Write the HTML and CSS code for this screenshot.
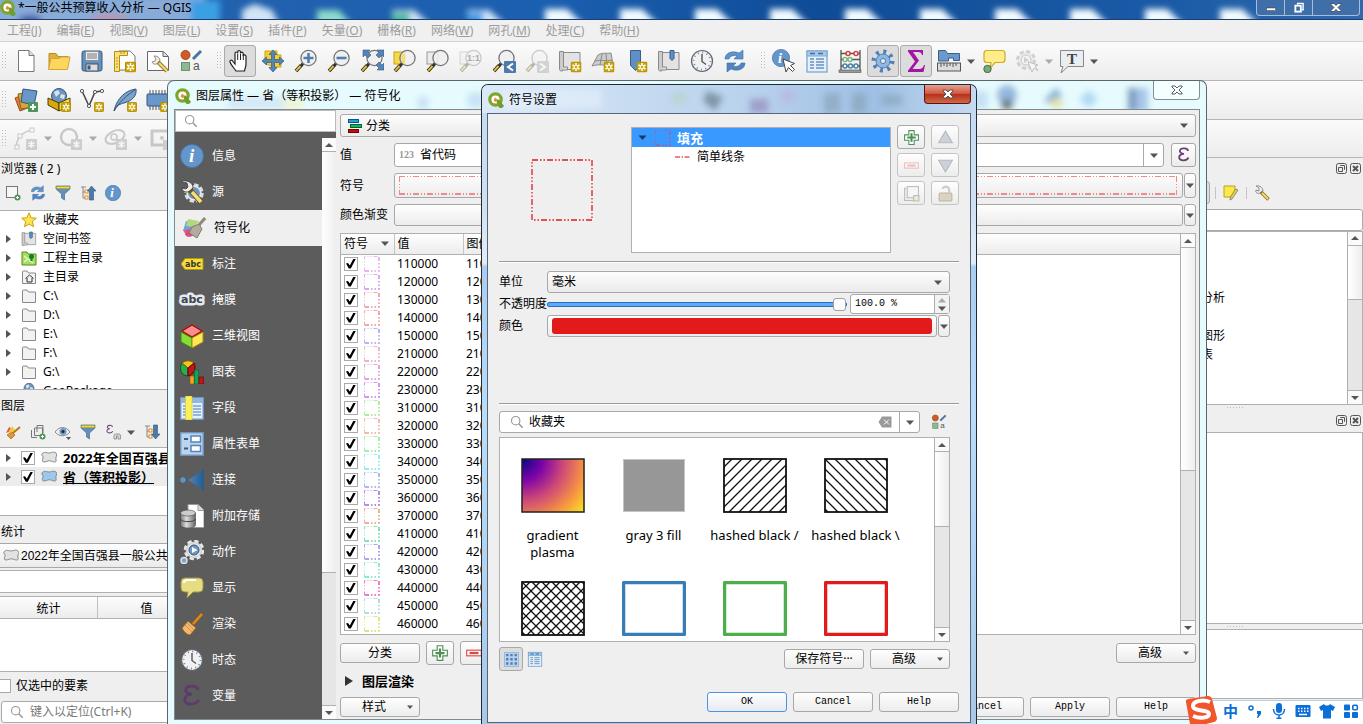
FILE: index.html
```html
<!DOCTYPE html>
<html lang="zh-CN">
<head>
<meta charset="utf-8">
<title>*一般公共预算收入分析 — QGIS</title>
<link rel="stylesheet" href="styles.css">
</head>
<body>
<svg class="defs" width="0" height="0" aria-hidden="true">
<defs>
<filter id="soft" x="-50%" y="-50%" width="200%" height="200%"><feGaussianBlur stdDeviation="3"/></filter>
<radialGradient id="plasma" gradientUnits="userSpaceOnUse" cx="2" cy="2" r="80"><stop offset="0" stop-color="#0d0887"/><stop offset=".25" stop-color="#7e03a8"/><stop offset=".5" stop-color="#cc4778"/><stop offset=".77" stop-color="#f89540"/><stop offset="1" stop-color="#f8e621"/></radialGradient>
<linearGradient id="cone"><stop offset="0" stop-color="#4e86bb"/><stop offset="1" stop-color="#245a90"/></linearGradient>
<linearGradient id="cyl"><stop offset="0" stop-color="#777"/><stop offset=".4" stop-color="#ddd"/><stop offset="1" stop-color="#666"/></linearGradient>
<pattern id="h1" width="10" height="10" patternUnits="userSpaceOnUse"><path d="M-1 11L11-1M-1 1L1-1M9 11L11 9" stroke="#111" stroke-width="1.3"/></pattern>
<pattern id="h2" width="10" height="10" patternUnits="userSpaceOnUse"><path d="M-1-1L11 11M9-1L11 1M-1 9L1 11" stroke="#111" stroke-width="1.3"/></pattern>
</defs>
<symbol id="nb" viewBox="0 0 11 11"><rect x=".5" y=".5" width="10" height="10" rx="1" fill="#c9a40c" stroke="#b28f00"/><path d="M5.500 1.500v8M2 3.500l7 4M9 3.500l-7 4" stroke="#fff" stroke-width="1.500"/><circle cx="5.500" cy="5.500" r="1.200" fill="#c9a40c"/></symbol>
<symbol id="logo" viewBox="0 0 16 16"><circle cx="7.500" cy="7.500" r="5.700" fill="#fff" stroke="#7da62b" stroke-width="3.200"/><path d="M8 8l3-.5 5 6.500-2 2-3-.3z" fill="#6f9d28"/><path d="M7 5.500l3 2.500-2.500 2-2-1.500z" fill="#ee8b3a"/></symbol>
<symbol id="mag" viewBox="0 0 24 24"><path d="M9 14.500l-2 2.500" stroke="#333" stroke-width="3"/><path d="M7 16.500L2 22" stroke="#222" stroke-width="3.500"/><path d="M6.500 17L2.300 21.700" stroke="#ecc12c" stroke-width="2"/><circle cx="14.500" cy="9" r="7.600" fill="#efefef" fill-opacity=".85" stroke="#777" stroke-width="1.300"/></symbol>
<symbol id="i-new" viewBox="0 0 24 24"><path d="M4.500 1.500h10.500l5 5v16H4.500z" fill="#fff" stroke="#777"/><path d="M15 1.500v5h5" fill="#ddd" stroke="#777"/></symbol>
<symbol id="i-open" viewBox="0 0 24 24"><path d="M2 20V4.500h7l2 3h10v4" fill="#e0b13a" stroke="#b78d27"/><path d="M1.500 20.500L4 9.500h8l2-1.500h9l-2.500 12.500z" fill="#ffd75e" stroke="#d3a63a"/></symbol>
<symbol id="i-save" viewBox="0 0 24 24"><rect x="2" y="2" width="20" height="20" rx="2" fill="#6391c1" stroke="#365b86"/><rect x="5.500" y="2.500" width="13" height="9" fill="#eee" stroke="#777" stroke-width=".6"/><path d="M7 5h10M7 7h10M7 9h10" stroke="#777"/><rect x="6" y="15" width="12" height="7" fill="#ddd" stroke="#456"/><rect x="7.500" y="16.500" width="3" height="4" fill="#365b86"/></symbol>
<symbol id="i-layout" viewBox="0 0 24 24"><path d="M6 2h11l5 5v14H6z" fill="#fff" stroke="#777"/><path d="M1.500 2.500h13v4h-8v16h-5z" fill="#fbe27a" stroke="#b48f10"/><path d="M3 9h2M3 12h2M3 15h2M3 18h2M8 3v2M11 3v2" stroke="#b48f10"/><use href="#nb" x="12" y="12.500" width="11" height="11"/></symbol>
<symbol id="i-mgr" viewBox="0 0 24 24"><path d="M1.500 2.500h16l5 5v14h-21z" fill="#fff" stroke="#666"/><path d="M17 2.500v5h5" fill="#ddd" stroke="#666"/><path d="M8 7l2 3-1 2-3 1c1 3 4 2 5 2l3-3c0-3-2-5-5-5z" fill="#eee" stroke="#777" stroke-width=".8"/><path d="M12 13l9 9" stroke="#9a7b20" stroke-width="4"/><path d="M13 14l8 8" stroke="#f4dc7c" stroke-width="2"/></symbol>
<symbol id="i-style" viewBox="0 0 24 24"><circle cx="6.500" cy="6" r="4.500" fill="#cf5a2a" stroke="#a34a22"/><rect x="2.500" y="13.500" width="8" height="8" fill="#8cb98f" stroke="#6a946d"/><path d="M22 2l-8 8" stroke="#4a74a3" stroke-width="3"/></symbol>
<symbol id="i-pan" viewBox="0 0 24 24"><path d="M8 22c-2-3-5-6-6-9-.5-2 2-2.500 3-.5l2 2.500V4.500c0-2 2.500-2 2.700 0V3c0-2 2.600-2 2.800 0v1.500c.3-2 2.700-1.600 2.700.2V7c.3-1.700 2.800-1.600 2.800.4V15c0 3-1 4-1.500 7z" fill="#fff" stroke="#222" stroke-width="1.200"/><path d="M9.700 5v6M12.500 5v6M15.300 6v5" stroke="#222"/></symbol>
<symbol id="i-pansel" viewBox="0 0 24 24"><path d="M4 2h12v4h4v12h-8l-8-4z" fill="#f5d02f" stroke="#caa50c"/><path d="M12 1l4 4.500h-2.500V10.500H18.500V8l4.500 4-4.500 4v-2.500H13.500V18.500H16L12 23l-4-4.500h2.500V13.500H5.500V16L1 12l4.500-4v2.500h5V5.500H8z" fill="#5485b8" stroke="#355a80" stroke-width=".7"/></symbol>
<symbol id="i-zin" viewBox="0 0 24 24"><use href="#mag"/><path d="M14.500 4v10M9.500 9h10" stroke="#4e7fb2" stroke-width="2.600"/></symbol>
<symbol id="i-zout" viewBox="0 0 24 24"><use href="#mag"/><path d="M9.500 9h10" stroke="#4e7fb2" stroke-width="2.600"/></symbol>
<symbol id="i-zfull" viewBox="0 0 24 24"><use href="#mag"/><path d="M3 1h7L8 3l3 3-3 3-3-3-2 2zM24 1v7l-2-2-3 3-3-3 3-3-2-2zM24 21h-7l2-2-3-3 3-3 3 3 2-2z" fill="#5485b8" stroke="#355a80" stroke-width=".6"/></symbol>
<symbol id="i-zsel" viewBox="0 0 24 24"><rect x="1" y="3" width="11" height="12" fill="#f5d94a" stroke="#c4a20e"/><use href="#mag"/><path d="M8 5h4v9H9z" fill="#f5d94a" fill-opacity=".7"/></symbol>
<symbol id="i-zlay" viewBox="0 0 24 24"><rect x="1" y="3" width="11" height="12" fill="#ececec" stroke="#999"/><use href="#mag"/></symbol>
<symbol id="i-znat" viewBox="0 0 24 24"><g opacity=".35"><rect x="1" y="3" width="11" height="12" fill="#eee" stroke="#999"/><use href="#mag"/></g></symbol>
<symbol id="i-zlast" viewBox="0 0 24 24"><use href="#mag"/><rect x="12" y="12" width="12" height="12" rx="1" fill="#4c7bab"/><path d="M21 14.500l-5 3.500 5 3.500" fill="none" stroke="#fff" stroke-width="2"/></symbol>
<symbol id="i-znext" viewBox="0 0 24 24"><g opacity=".35"><use href="#mag"/><rect x="12" y="12" width="12" height="12" rx="1" fill="#999"/><path d="M15 14.500l5 3.500-5 3.500" fill="none" stroke="#fff" stroke-width="2"/></g></symbol>
<symbol id="map" viewBox="0 0 24 24"><path d="M4 3.500h18v17H5" fill="#e3e3e3" stroke="#8a8a8a"/><path d="M1.500 2.500h4v18c0 2-4 2-4 0z" fill="#ccc" stroke="#8a8a8a"/><path d="M5.500 18h4v3h-6" fill="#ddd" stroke="#8a8a8a"/></symbol>
<symbol id="i-mapn" viewBox="0 0 24 24"><use href="#map"/><use href="#nb" x="12.500" y="12.500" width="11" height="11"/></symbol>
<symbol id="i-map3" viewBox="0 0 24 24"><path d="M1 17L7 6c5-3 8-1 13-2l2 12c-6 2-12-2-21 1z" fill="#ccc" stroke="#8a8a8a"/><path d="M4 12c6-2 10 1 17-1M11 5l-2 11M15 5l1 11" stroke="#8a8a8a" fill="none"/><use href="#nb" x="12.500" y="12.500" width="11" height="11"/></symbol>
<symbol id="i-bmn" viewBox="0 0 24 24"><path d="M6.500 1.500h10v15l-5 5-5-5z" fill="#5f8fc4" stroke="#3b5f88"/><use href="#nb" x="12.500" y="12.500" width="11" height="11"/></symbol>
<symbol id="i-bm" viewBox="0 0 24 24"><use href="#map"/><path d="M13 1.500h4v8l-2 2-2-2z" fill="#5f8fc4" stroke="#3b5f88"/></symbol>
<symbol id="i-clock" viewBox="0 0 24 24"><circle cx="12" cy="12" r="10.500" fill="#f1f1f1" stroke="#666" stroke-width="1.200"/><circle cx="12" cy="12" r="8.500" fill="none" stroke="#5f8fc4" stroke-width="2" stroke-dasharray="1 3.450"/><path d="M12 5v7.500l4 3" fill="none" stroke="#555" stroke-width="1.400"/></symbol>
<symbol id="i-ref" viewBox="0 0 24 24"><path d="M2 10C2 4 9 1 16 4l4-3v9h-9l3-3c-4-1-7 0-8 3z" fill="#5f93cc" stroke="#3c6ea5" stroke-width=".6"/><path d="M22 14c0 6-7 9-14 6l-4 3v-9h9l-3 3c4 1 7 0 8-3z" fill="#4f84bf" stroke="#3c6ea5" stroke-width=".6"/></symbol>
<symbol id="info" viewBox="0 0 24 24"><circle cx="12" cy="12" r="11.500" fill="#6496cc" stroke="#4676a9"/></symbol>
<symbol id="i-cur" viewBox="0 0 24 24"><path d="M11 10l3 13 2.500-4.500 4 4 2-2-4-4 4-2z" fill="#fff" stroke="#444"/></symbol>
<symbol id="i-tab" viewBox="0 0 24 24"><rect x="2" y="2" width="20" height="21" fill="#e6f0fa" stroke="#7aa6d4" stroke-width="1.300"/><rect x="2" y="2" width="20" height="5" fill="#a8cbe9" stroke="#7aa6d4"/><path d="M5 4.500h5M13 4.500h5" stroke="#3f6d9d" stroke-width="1.500"/><path d="M5 10h4M11 10h8M5 13h4M11 13h8M5 16h4M11 16h8M5 19h4M11 19h8" stroke="#6792bf" stroke-width="1.400"/></symbol>
<symbol id="i-abac" viewBox="0 0 24 24"><path d="M3 1v21M22 1v21M3 4.500h19M3 10.500h19M3 17h19" stroke="#555" stroke-width="1.300"/><rect x="1" y="21" width="22" height="2.500" fill="#999" stroke="#555" stroke-width=".6"/><g fill="#fff" stroke-width="1.600"><g stroke="#d04545"><circle cx="10" cy="4.500" r="2"/><circle cx="18" cy="4.500" r="2"/></g><g stroke="#7cb97c"><circle cx="7" cy="10.500" r="2"/><circle cx="12" cy="10.500" r="2"/></g><g stroke="#4b84a8"><circle cx="7" cy="17" r="2"/><circle cx="12.500" cy="17" r="2"/><circle cx="18" cy="17" r="2"/></g></g></symbol>
<symbol id="i-gear" viewBox="0 0 24 24"><circle cx="12" cy="12" r="9" fill="none" stroke="#4e80b8" stroke-width="5" stroke-dasharray="2.800 4.270"/><circle cx="12" cy="12" r="7" fill="#8fb7e2" stroke="#4e80b8"/><circle cx="12" cy="12" r="2.600" fill="#e6e6e6" stroke="#4e80b8"/></symbol>
<symbol id="i-sum" viewBox="0 0 24 24"><path d="M4 1h15v5h-1c-.5-2-1.500-3-4-3H9l6 8.500L8.500 20H15c3 0 4-1.500 5-4h1l-1.500 7H4v-1.500L11 12.500 4 2.500z" fill="#a414a4"/></symbol>
<symbol id="i-meas" viewBox="0 0 24 24"><path d="M1.500 1.500h7l2 3h12v7h-6V9h-5v3h-10z" fill="#6a99cc" stroke="#3b5f88"/><rect x=".5" y="14" width="23" height="8" fill="#ddd" stroke="#555"/><path d="M4 14v4M7 14v3M10 14v4M13 14v3M16 14v4M19 14v3" stroke="#555"/></symbol>
<symbol id="i-tip" viewBox="0 0 24 24"><path d="M5 1.500h15q3 0 3 3v6q0 3-3 3h-7l-5 6 1-6H5q-3 0-3-3v-6q0-3 3-3z" fill="#ffed8a" stroke="#cdab20" stroke-width="1.200"/><circle cx="5.500" cy="20" r="3.700" fill="#79a97c" stroke="#3f6f43"/></symbol>
<symbol id="i-act" viewBox="0 0 24 24"><g opacity=".4"><circle cx="11" cy="11" r="8.500" fill="#ddd" stroke="#999" stroke-width="3" stroke-dasharray="4 2.680"/><circle cx="11" cy="11" r="5" fill="#eee" stroke="#888"/><path d="M9 8l5 3-5 3z" fill="#999"/><path d="M13 13l4 10 2-4 4 3-3-5 3-1z" fill="#fff" stroke="#777"/></g></symbol>
<symbol id="i-text" viewBox="0 0 24 24"><path d="M.5 1.500h23v16H8L1 24l2-6.500H.5z" fill="#e8eef2" stroke="#888"/></symbol>
<symbol id="i-dsm" viewBox="0 0 24 24"><path d="M1 10l10-4 5 13-10 4z" fill="#e8793a" stroke="#a44a16"/><path d="M4 6l11-2 3 15-11 2z" fill="#d9a72c" stroke="#7a6a2a"/><path d="M9 1l14 2-3 14-13-3z" fill="#6a97c9" stroke="#33557e"/><rect x="14" y="14" width="10" height="10" rx="1" fill="#4e9657"/><path d="M19 16v6M16 19h6" stroke="#fff" stroke-width="2"/></symbol>
<symbol id="i-gpkg" viewBox="0 0 24 24"><circle cx="12" cy="8" r="7.500" fill="#6d94bd" stroke="#33557e"/><path d="M7 4l4-2 2 3-4 4zM14 6l4 1-1 4-4-1z" fill="#d7e4f0"/><path d="M1 10l11 5v8L1 17z" fill="#d8a90f" stroke="#4a3c00"/><path d="M23 10l-11 5v8l11-6z" fill="#f7d94e" stroke="#4a3c00"/></symbol>
<symbol id="i-gpkgn" viewBox="0 0 24 24"><use href="#i-gpkg"/><use href="#nb" x="14" y="14" width="10" height="10"/></symbol>
<symbol id="i-vec" viewBox="0 0 24 24"><path d="M2 3l7 15 6-14 7-1" fill="none" stroke="#444" stroke-width="1.500"/><g fill="#fff" stroke="#555"><circle cx="2" cy="3" r="1.600"/><circle cx="9" cy="18" r="1.600"/><circle cx="15" cy="4" r="1.600"/><circle cx="22" cy="3" r="1.600"/></g><use href="#nb" x="14" y="14" width="10" height="10"/></symbol>
<symbol id="i-fea" viewBox="0 0 24 24"><path d="M1 23C4 9 14 2 23 1c1 7-4 12-12 14-4 1-7 2-10 8z" fill="#7ba3cc" stroke="#33557e"/><path d="M1 23C7 13 14 7 22 2" stroke="#33557e" fill="none"/><use href="#nb" x="14" y="14" width="10" height="10"/></symbol>
<symbol id="i-chip" viewBox="0 0 24 24"><path d="M4 2v20M7 2v20M10 2v20M13 2v20M16 2v20M19 2v20" stroke="#555"/><rect x="1" y="6" width="22" height="12" rx="1" fill="#6a97c9" stroke="#33557e"/><use href="#nb" x="14" y="14" width="10" height="10"/></symbol>
<symbol id="i-d1" viewBox="0 0 24 24"><g opacity=".4"><path d="M2 20C3 10 8 5 18 3" fill="none" stroke="#888" stroke-width="1.500"/><g fill="#fff" stroke="#888"><rect x="1" y="18" width="4" height="4"/><rect x="4" y="7" width="4" height="4"/><rect x="16" y="1" width="4" height="4"/></g><rect x="12" y="12" width="11" height="11" fill="#999"/><path d="M17.500 14v7M14.500 15.500l6 4M20.500 15.500l-6 4" stroke="#fff" stroke-width="1.500"/></g></symbol>
<symbol id="i-d2" viewBox="0 0 24 24"><g opacity=".4"><circle cx="10" cy="10" r="8" fill="none" stroke="#888" stroke-width="2.500"/><rect x="12" y="12" width="11" height="11" fill="#999"/><path d="M17.500 14v7M14.500 15.500l6 4M20.500 15.500l-6 4" stroke="#fff" stroke-width="1.500"/></g></symbol>
<symbol id="i-d3" viewBox="0 0 24 24"><g opacity=".4"><ellipse cx="11" cy="10" rx="10" ry="6" transform="rotate(-25 11 10)" fill="none" stroke="#888" stroke-width="2"/><circle cx="10" cy="10" r="3" fill="none" stroke="#888" stroke-width="1.500"/><rect x="12" y="12" width="11" height="11" fill="#999"/><path d="M17.500 14v7M14.500 15.500l6 4M20.500 15.500l-6 4" stroke="#fff" stroke-width="1.500"/></g></symbol>
<symbol id="i-d4" viewBox="0 0 24 24"><g opacity=".4"><rect x="3" y="4" width="20" height="14" fill="none" stroke="#888" stroke-width="3"/><circle cx="13" cy="11" r="2" fill="#888"/><rect x="14" y="13" width="10" height="10" fill="#999"/></g></symbol>
<symbol id="s-add" viewBox="0 0 16 16"><rect x="1.500" y="1.500" width="11" height="11" fill="#f6f6f6" stroke="#777"/><circle cx="12.500" cy="12.500" r="3" fill="#4e9657"/><path d="M12.500 11v3M11 12.500h3" stroke="#fff"/></symbol>
<symbol id="s-fun" viewBox="0 0 16 16"><path d="M1 1h14v3L9.500 9v6l-3-2V9L1 4z" fill="#6390b8" stroke="#44709a" stroke-width=".7"/><path d="M1.500 1.500h13v2h-13z" fill="#f4dc4a" stroke="#b99c14" stroke-width=".6"/></symbol>
<symbol id="s-up" viewBox="0 0 16 16"><path d="M1 2h5M3 2v11h4M3 7h4" stroke="#888" fill="none"/><rect x="5" y="5" width="3" height="3" fill="#fff" stroke="#e58a1e"/><rect x="5" y="11" width="3" height="3" fill="#fff" stroke="#e58a1e"/><path d="M11.500 1L16 6h-2.500v9h-4V6H7.500z" fill="#4c7bab" stroke="#2f557d" stroke-width=".6"/></symbol>
<symbol id="s-down" viewBox="0 0 16 16"><path d="M1 2h5M3 2v11h4M3 7h4" stroke="#888" fill="none"/><rect x="5" y="5" width="3" height="3" fill="#fff" stroke="#e58a1e"/><rect x="5" y="11" width="3" height="3" fill="#fff" stroke="#e58a1e"/><path d="M11.500 15L16 10h-2.500V1h-4v9H7.500z" fill="#4c7bab" stroke="#2f557d" stroke-width=".6"/></symbol>
<symbol id="s-star" viewBox="0 0 16 16"><path d="M8 .8l2.100 5 5.200.4-4 3.400 1.300 5.200L8 12l-4.600 2.800 1.300-5.200-4-3.400 5.200-.4z" fill="#ffe44d" stroke="#c89f14"/></symbol>
<symbol id="s-prj" viewBox="0 0 16 16"><path d="M1 2h5l1 2h8v11H1z" fill="#a6df5c" stroke="#5a8a24"/><path d="M3 6l9 7M3 12l4-3" stroke="#e8f8c8" stroke-width="1.500"/><circle cx="10.500" cy="6.500" r="2.500" fill="#12802a"/><path d="M10.500 8v3" stroke="#12802a" stroke-width="2"/></symbol>
<symbol id="s-fold" viewBox="0 0 16 16"><path d="M1.500 3q0-1 1-1H6l1.500 2H14.500v10.500h-13z" fill="#f2f2f2" stroke="#888"/></symbol>
<symbol id="s-home" viewBox="0 0 16 16"><use href="#s-fold"/><path d="M4.500 9.500L8.500 6l4 3.500M6 9v4h5V9" fill="none" stroke="#333"/></symbol>
<symbol id="s-brush" viewBox="0 0 16 16"><path d="M1 9l3-6 5 3z" fill="#e65a4a"/><path d="M3 9l4-7 4 5z" fill="#f0cf3c"/><path d="M2 11l5-3 3 3-4 4z" fill="#e2962f" stroke="#9a5d12" stroke-width=".6"/><path d="M8 9l7-6" stroke="#b97524" stroke-width="2"/></symbol>
<symbol id="s-grp" viewBox="0 0 16 16"><path d="M1.500 6v7.500H7M4.500 4v7.500h8V4zM7 8V1.500h6V9" fill="#eee" stroke="#777"/><circle cx="12.500" cy="12.500" r="3" fill="#4e9657"/><path d="M12.500 11v3M11 12.500h3" stroke="#fff"/></symbol>
<symbol id="s-eye" viewBox="0 0 16 16"><path d="M0 8c4-6 11-6 15 0-4 5-11 5-15 0z" fill="#eee" stroke="#888"/><circle cx="8" cy="7.500" r="3.500" fill="#6d9ac8"/><circle cx="8" cy="7.500" r="1.500" fill="#222"/><path d="M11 13h5l-2.500 3z" fill="#555"/></symbol>
<symbol id="s-eps" viewBox="0 0 16 16"><path d="M12 4c0-3-7-3.500-8-.8C3.300 5 5 6.800 8 6.800 4.500 7 2.500 9 3.300 11.300c1 3 8 2.800 9-.8" fill="none" stroke="currentColor" stroke-width="1.800"/></symbol>
<symbol id="s-epsf" viewBox="0 0 16 16"><use href="#s-eps" x="0" y="0" width="10" height="11"/><path d="M9 15v-3q0-2 1.500-2H14q1.500 0 1.500 2v3h-2.500v-3h-1.500v3z" fill="#ddd" stroke="#777" stroke-width=".7"/></symbol>
<symbol id="s-poly" viewBox="0 0 16 16"><path d="M1 4c2-3 5-1 7-1s5-2 7 0-1 4 0 7-3 2-5 1-5 1-7 1-2-2-1-4-2-2-1-4z" fill="currentColor" stroke="#888"/></symbol>
<symbol id="s-glass" viewBox="0 0 16 16"><circle cx="6.500" cy="6.500" r="4.800" fill="none" stroke="#999" stroke-width="1.300"/><path d="M10 10l4.500 4.500" stroke="#999" stroke-width="1.800"/></symbol>
<symbol id="s-wrench" viewBox="0 0 16 16"><path d="M2 1l3 2v3L2 5C1 8 4 9 6 8l3-2C9 3 6 0 2 1z" fill="#eee" stroke="#777" stroke-width=".8"/><path d="M7 7l7.500 7.500" stroke="#8b7420" stroke-width="3.500"/><path d="M8 8l6 6" stroke="#f4dc7c" stroke-width="1.800"/></symbol>
<symbol id="s-note" viewBox="0 0 16 16"><path d="M1 1h11v8l-3 3H1z" fill="#fbe74e" stroke="#c0a00f"/><path d="M15 5L9 14l-2 1 .5-3 5-8z" fill="#e6d34a" stroke="#777" stroke-width=".8"/></symbol>
<symbol id="s-class" viewBox="0 0 16 16"><rect x="1.500" y="1.500" width="10" height="3" fill="#1fa6c4" stroke="#0f4fa0"/><rect x="3.500" y="6.500" width="11" height="3" fill="#0db867" stroke="#076030"/><rect x="1.500" y="11.500" width="10" height="3" fill="#c40f0f" stroke="#700"/></symbol>
<symbol id="s-plus" viewBox="0 0 16 16"><path d="M5.500 1.500h5v4h4v5h-4v4h-5v-4h-4v-5h4z" fill="#fff" stroke="#4e8f57"/><path d="M8 4v8M4 8h8" stroke="#4e8f57" stroke-width="2"/></symbol>
<symbol id="s-minus" viewBox="0 0 16 16"><rect x="1.500" y="5.500" width="13" height="5" fill="#fff" stroke="#e04545"/><path d="M4 8h8" stroke="#e04545" stroke-width="2"/></symbol>
<symbol id="s-tu" viewBox="0 0 16 16"><path d="M8 2l6.500 11h-13z" fill="#ccd2d8" stroke="#b4bac0"/></symbol>
<symbol id="s-td" viewBox="0 0 16 16"><path d="M8 14L1.500 3h13z" fill="#ccd2d8" stroke="#b4bac0"/></symbol>
<symbol id="s-dup" viewBox="0 0 16 16"><path d="M3 3H1.500v11.500H12V13" fill="#eee" stroke="#bbb"/><rect x="4" y="1.500" width="10.500" height="10.500" fill="#f6f6f6" stroke="#bbb"/><rect x="10" y="10" width="5" height="5" fill="#eee9d0" stroke="#bbb"/></symbol>
<symbol id="s-lock" viewBox="0 0 16 16"><path d="M5 3.500C7 .5 11.500 1 11.500 5v2" fill="none" stroke="#ccc" stroke-width="2"/><rect x="2" y="7.500" width="12" height="7.500" rx="1" fill="#d9d3c0" stroke="#bbb5a5"/></symbol>
<symbol id="s-grid" viewBox="0 0 16 16"><rect x=".5" y=".5" width="15" height="15" fill="#b9d3ee" stroke="#9bb9d8"/><path d="M3.500 2v12M8 2v12M12.500 2v12" stroke="#4d7db4" stroke-width="2.500" stroke-dasharray="2.500 2"/></symbol>
<symbol id="s-sw" viewBox="0 0 16 16"><g fill="none" stroke="currentColor"><path d="M.5 15.500V.5h15" stroke-dasharray="4 2 1 2 1 2"/><path d="M15 1v14.500M1 15h14.500" stroke-width="2" stroke-dasharray="4 2 1.500 2 1.500 2"/></g></symbol>
<symbol id="p-src" viewBox="0 0 24 24"><circle cx="14" cy="13" r="8" fill="#7ea4cf" stroke="#ddd" stroke-width="3.500" stroke-dasharray="4.200 2.080"/><circle cx="14" cy="13" r="6.700" fill="#6f97c5" stroke="#e8e8e8" stroke-width="1.500"/><path d="M2 2l5 1 1 4-2 2-4-1c0 4 5 5 8 3l3-3c0-5-5-8-11-7z" fill="#eee" stroke="#333" stroke-width=".8"/><path d="M10 10l11 12" stroke="#6a5416" stroke-width="5.500"/><path d="M12 12l9 10" stroke="#f5dd80" stroke-width="3.500"/></symbol>
<symbol id="p-sym" viewBox="0 0 24 24"><path d="M4 5l10 2-5 9-8-1z" fill="#6aa6d8"/><path d="M6 3l11 2-4 6-9-1z" fill="#b5d77c"/><path d="M1 14l8-1-1 7-3 1z" fill="#e35e8f"/><path d="M5 13l7 6-4 2-5-2z" fill="#d94f7c"/><path d="M10 11l7-3 3 5-5 9-8-5z" fill="#b2ab9f" stroke="#716a5e" stroke-width=".8"/><path d="M17 9l6-7" stroke="#8f8779" stroke-width="3"/></symbol>
<symbol id="p-lab" viewBox="0 0 24 24"><path d="M1 12l4-5.500h18v11H5z" fill="#f6dd3b" stroke="#b5950a"/></symbol>
<symbol id="p-3d" viewBox="0 0 24 24"><path d="M12 1l10 6-10 6L2 7z" fill="#f88e8e" stroke="#b00808" stroke-width="1.300"/><path d="M1 8l11 6v10L1 18z" fill="#86dd38" stroke="#3c8a10"/><path d="M23 8l-11 6v10l11-6z" fill="#fce957" stroke="#a98b08"/></symbol>
<symbol id="p-dia" viewBox="0 0 24 24"><path d="M8 8V16A8 8 0 0 1 2 3z" fill="#2aab4e" stroke="#0c5222"/><path d="M8 8L2 3a9 9 0 0 1 12 0z" fill="#f6c51d" stroke="#7d6105"/><path d="M8 8l6-5a9 9 0 0 1-6 13z" fill="#c01818" stroke="#600"/><rect x="10" y="16" width="4" height="8" fill="#f4a51c" stroke="#7d5105" stroke-width=".6"/><rect x="14.500" y="10" width="4" height="14" fill="#12a552" stroke="#064" stroke-width=".6"/><rect x="19" y="17" width="4.500" height="7" fill="#c01818" stroke="#600" stroke-width=".6"/></symbol>
<symbol id="p-fld" viewBox="0 0 24 24"><rect x=".7" y="1.700" width="22.500" height="21.500" fill="#e6f0fa" stroke="#6b97c6" stroke-width="1.400"/><rect x="1" y="2" width="22" height="5" fill="#8fb7df"/><path d="M3 10h4M13 10h8M3 13h4M13 13h8M3 16h4M13 16h8M3 19h4M13 19h8" stroke="#7aa1cb" stroke-width="1.500"/><rect x="5.500" y="0" width="6.500" height="24" fill="#fcf05a" stroke="#d8c51c" stroke-width=".6"/></symbol>
<symbol id="p-frm" viewBox="0 0 24 24"><rect x=".7" y=".7" width="22.500" height="22.500" fill="#bdd4eb" stroke="#6b97c6" stroke-width="1.400"/><path d="M4 7h4M4 16.500h4" stroke="#335c88" stroke-width="2"/><rect x="11" y="4" width="9.500" height="6" fill="#fff" stroke="#5584b8" stroke-width="1.500"/><rect x="11" y="13.500" width="9.500" height="6" fill="#fff" stroke="#5584b8" stroke-width="1.500"/></symbol>
<symbol id="p-join" viewBox="0 0 24 24"><circle cx="3" cy="12" r="2.700" fill="#5f93c9"/><path d="M8 12L24 1.500v21z" fill="url(#cone)"/></symbol>
<symbol id="p-sto" viewBox="0 0 24 24"><path d="M8 .5h10l6 6v17H8z" fill="#fff" stroke="#999"/><path d="M18 .5v6h6" fill="#ddd" stroke="#999"/><path d="M.5 9v12c0 4 15 4 15 0V9z" fill="url(#cyl)" stroke="#444" stroke-width=".6"/><path d="M.5 15c0 3.500 15 3.500 15 0" fill="none" stroke="#444"/><ellipse cx="8" cy="9" rx="7.500" ry="3" fill="#ccc" stroke="#444" stroke-width=".6"/></symbol>
<symbol id="p-act" viewBox="0 0 24 24"><circle cx="14" cy="10" r="8.300" fill="#ddd" stroke="#e8e8e8" stroke-width="4" stroke-dasharray="4 2.520"/><circle cx="14" cy="10" r="7.300" fill="#e8e8e8" stroke="#ccc"/><circle cx="14" cy="10" r="5" fill="#6f97c5" stroke="#33557e"/><path d="M12 7l5.500 3-5.500 3z" fill="#fff"/><circle cx="4" cy="20.500" r="3" fill="#7ea4cf" stroke="#e0e0e0" stroke-width="1.500"/></symbol>
<symbol id="p-dis" viewBox="0 0 24 24"><path d="M5 2h14q4 0 4 4v6q0 4-4 4h-6l-6 6 1-6H5q-4 0-4-4V6q0-4 4-4z" fill="#e6dc82" stroke="#a39843"/><path d="M4 7q0-3 3-3h9" stroke="#fff" stroke-width="2" fill="none"/></symbol>
<symbol id="p-ren" viewBox="0 0 24 24"><path d="M13 12l9-10" stroke="#8f5c14" stroke-width="4"/><path d="M13 12l9-10" stroke="#d58b2c" stroke-width="2.500"/><path d="M8 9l8 7-6 7c-3 0-6-3-8-7z" fill="#f0b870" stroke="#9a6420"/><path d="M5 13l7 7M7 11l7 7" stroke="#c98a40" stroke-width=".8"/></symbol>
<symbol id="ar" viewBox="0 0 8 5"><path d="M0 .5h8L4 5z" fill="currentColor"/></symbol>
<symbol id="x" viewBox="0 0 12 10"><path d="M1 1h3l2 2 2-2h3v1L8 5l3 3v1H8L6 7 4 9H1V8l3-3-3-3z" fill="currentColor" stroke="#444a55" stroke-width=".9"/></symbol>
<symbol id="dk" viewBox="0 0 25 11"><g fill="none" stroke="#555"><rect x=".5" y=".5" width="10" height="10" rx="2"/><path d="M4.500 3V2.500h4v4H8M2.500 4.500h4v4h-4z"/><rect x="14.500" y=".5" width="10" height="10" rx="2"/><path d="M17 3l5 5M22 3l-5 5" stroke-width="2"/></g></symbol>
</svg>

<main class="app">
<header class="titlebar">
<svg class="haze" viewBox="0 0 1363 20" preserveAspectRatio="none" aria-hidden="true"><g filter="url(#soft)"><rect x="-10" y="-5" width="215" height="32" fill="#a9c3e6" opacity=".75"/><ellipse cx="110" cy="20" rx="20" ry="5" fill="#c88f9c"/><ellipse cx="30" cy="20" rx="12" ry="5" fill="#3c4fa8"/><path d="M190 0h30v26h-30z" fill="#3b9fe4"/><path d="M242 26V10l12-6 18 6 8 16zM392 26V10h22l18 16zM467 26V10h22l18 16z" fill="#d3e4f5"/><path d="M317 26V10h22l14 16z" fill="#8edccb"/><path d="M392 26V12h18v14z" fill="#48bba0"/><path d="M467 26V12h16v14z" fill="#3a9be8"/><path d="M545 26V9h22l18 17zM620 26V9h22l18 17zM695 26V9h22l18 17zM770 26V9h22l18 17zM845 26V9h22l18 17zM920 26V9h22l18 17zM995 26V9h22l18 17zM1070 26V9h22l18 17zM1145 26V9h22l18 17zM1220 26V9h22l18 17z" fill="#f2fbff"/></g></svg>
<svg class="i16"><use href="#logo"/></svg><h1>*一般公共预算收入分析 — QGIS</h1>
<div class="winbtns"><button aria-label="最小化"><svg viewBox="0 0 12 12"><rect x="1" y="6.500" width="10" height="3" fill="#fff" stroke="#333" stroke-width=".6"/></svg></button><button aria-label="还原"><svg viewBox="0 0 12 12"><path d="M4.500 3V1.500h6v7H9" fill="none" stroke="#fff" stroke-width="1.500"/><rect x="2" y="4" width="6" height="6.500" fill="none" stroke="#fff" stroke-width="2"/></svg></button><button class="wide" aria-label="关闭"><svg viewBox="0 0 12 10" color="#fff"><use href="#x"/></svg></button></div>
</header>
<nav class="menubar"><button>工程(<u>J</u>)</button><button>编辑(<u>E</u>)</button><button>视图(<u>V</u>)</button><button>图层(<u>L</u>)</button><button>设置(<u>S</u>)</button><button>插件(<u>P</u>)</button><button>矢量(<u>O</u>)</button><button>栅格(<u>R</u>)</button><button>网络(<u>W</u>)</button><button>网孔(<u>M</u>)</button><button>处理(<u>C</u>)</button><button>帮助(<u>H</u>)</button></nav>
<div class="toolbar">
<i class="grip first"></i>
<button aria-label="新建"><svg><use href="#i-new"/></svg></button><button aria-label="打开"><svg><use href="#i-open"/></svg></button><button aria-label="保存"><svg><use href="#i-save"/></svg></button><button aria-label="新建布局"><svg><use href="#i-layout"/></svg></button><button aria-label="布局管理"><svg><use href="#i-mgr"/></svg></button><button aria-label="样式管理"><svg viewBox="0 0 24 24"><use href="#i-style"/><text class="ga" x="14" y="21">a</text></svg></button>
<i class="grip"></i>
<button class="on" aria-label="平移"><svg><use href="#i-pan"/></svg></button><button aria-label="平移到所选"><svg><use href="#i-pansel"/></svg></button><button aria-label="放大"><svg><use href="#i-zin"/></svg></button><button aria-label="缩小"><svg><use href="#i-zout"/></svg></button><button aria-label="全图"><svg><use href="#i-zfull"/></svg></button><button aria-label="缩放到所选"><svg><use href="#i-zsel"/></svg></button><button aria-label="缩放到图层"><svg><use href="#i-zlay"/></svg></button><button aria-label="原始分辨率"><svg viewBox="0 0 24 24"><use href="#i-znat"/><text class="g1" x="8" y="12">1:1</text></svg></button><button aria-label="上一视图"><svg><use href="#i-zlast"/></svg></button><button aria-label="下一视图"><svg><use href="#i-znext"/></svg></button><button aria-label="新建地图"><svg><use href="#i-mapn"/></svg></button><button aria-label="新建三维地图"><svg><use href="#i-map3"/></svg></button><button aria-label="新建书签"><svg><use href="#i-bmn"/></svg></button><button aria-label="书签"><svg><use href="#i-bm"/></svg></button><button aria-label="时态控制"><svg><use href="#i-clock"/></svg></button><button aria-label="刷新"><svg><use href="#i-ref"/></svg></button>
<i class="grip"></i>
<button aria-label="识别"><svg viewBox="0 0 24 24"><use href="#info" width="18" height="18"/><text class="gi small" x="6" y="14">i</text><use href="#i-cur"/></svg></button><button aria-label="属性表"><svg><use href="#i-tab"/></svg></button><button aria-label="字段计算器"><svg><use href="#i-abac"/></svg></button><button class="on" aria-label="工具箱"><svg><use href="#i-gear"/></svg></button><button class="on" aria-label="统计汇总"><svg><use href="#i-sum"/></svg></button><button class="dd" aria-label="测量"><svg><use href="#i-meas"/></svg><svg class="ar"><use href="#ar"/></svg></button><button aria-label="地图提示"><svg><use href="#i-tip"/></svg></button><button class="dd off" aria-label="运行动作"><svg><use href="#i-act"/></svg><svg class="ar"><use href="#ar"/></svg></button><button class="dd" aria-label="文字注记"><svg viewBox="0 0 24 24"><use href="#i-text"/><text class="gt" x="7" y="15">T</text></svg><svg class="ar"><use href="#ar"/></svg></button>
</div>
<div class="toolbar"><i class="grip first"></i><button aria-label="数据源管理"><svg><use href="#i-dsm"/></svg></button><button aria-label="新建数据包"><svg><use href="#i-gpkgn"/></svg></button><button aria-label="新建矢量"><svg><use href="#i-vec"/></svg></button><button aria-label="新建空间图层"><svg><use href="#i-fea"/></svg></button><button aria-label="新建临时图层"><svg><use href="#i-chip"/></svg></button></div>
<div class="toolbar last"><i class="grip first"></i><button class="dd off" aria-label="曲线"><svg><use href="#i-d1"/></svg><svg class="ar"><use href="#ar"/></svg></button><button class="dd off" aria-label="圆"><svg><use href="#i-d2"/></svg><svg class="ar"><use href="#ar"/></svg></button><button class="dd off" aria-label="椭圆"><svg><use href="#i-d3"/></svg><svg class="ar"><use href="#ar"/></svg></button><button class="off" aria-label="矩形"><svg><use href="#i-d4"/></svg></button></div>

<div class="workspace">
<aside class="dock left">
<h2>浏览器 ( 2 )</h2>
<div class="mini"><button aria-label="添加"><svg><use href="#s-add"/></svg></button><button aria-label="刷新"><svg><use href="#i-ref"/></svg></button><button aria-label="过滤"><svg><use href="#s-fun"/></svg></button><button aria-label="折叠"><svg><use href="#s-up"/></svg></button><button aria-label="属性"><svg viewBox="0 0 24 24"><use href="#info"/><text class="gi" x="8" y="18">i</text></svg></button></div>
<ul class="tree grow">
<li class="leaf"><svg><use href="#s-star"/></svg>收藏夹</li><li><svg><use href="#i-bm"/></svg>空间书签</li><li><svg><use href="#s-prj"/></svg>工程主目录</li><li><svg><use href="#s-home"/></svg>主目录</li><li><svg><use href="#s-fold"/></svg>C:\</li><li><svg><use href="#s-fold"/></svg>D:\</li><li><svg><use href="#s-fold"/></svg>E:\</li><li><svg><use href="#s-fold"/></svg>F:\</li><li><svg><use href="#s-fold"/></svg>G:\</li><li class="leaf"><svg><use href="#i-gpkg"/></svg>GeoPackage</li>
</ul>
<h2 class="tall">图层</h2>
<div class="mini layers"><button aria-label="样式"><svg><use href="#s-brush"/></svg></button><button aria-label="添加组"><svg><use href="#s-grp"/></svg></button><button aria-label="可见性"><svg><use href="#s-eye"/></svg></button><button aria-label="过滤"><svg><use href="#s-fun"/></svg></button><button class="eps" aria-label="表达式过滤"><svg><use href="#s-epsf"/></svg><svg class="ar"><use href="#ar"/></svg></button><button aria-label="展开"><svg><use href="#s-down"/></svg></button></div>
<ul class="tree laylist">
<li><input type="checkbox" checked id="l1"><svg class="gray"><use href="#s-poly"/></svg><label for="l1">2022年全国百强县</label></li>
<li class="cur"><input type="checkbox" checked id="l2"><svg class="blue"><use href="#s-poly"/></svg><label for="l2"><u>省（等积投影）</u></label></li>
</ul>
<h2 class="tall">统计</h2>
<div class="combo flat"><svg class="gray"><use href="#s-poly"/></svg><select aria-label="图层"><option>2022年全国百强县一般公共预算收入</option></select></div>
<input class="plain" aria-label="表达式">
<table class="stats"><thead><tr><th>统计</th><th>值</th></tr></thead></table>
<div class="only"><input type="checkbox" id="only"><label for="only">仅选中的要素</label></div>
<div class="locator"><svg><use href="#s-glass"/></svg><input placeholder="键入以定位(Ctrl+K)" aria-label="定位"></div>
</aside>
<aside class="dock right">
<div class="dockhead"><svg><use href="#dk"/></svg></div>
<div class="rtools"><button class="press" aria-label="选项"></button><i></i><button aria-label="就地编辑"><svg><use href="#s-note"/></svg></button><i></i><button aria-label="设置"><svg><use href="#s-wrench"/></svg></button></div>
<input class="rsearch" aria-label="搜索">
<div class="rtree"><ul><li>制图</li><li>图表</li><li>网络</li><li>栅格分析</li><li>插值</li><li>矢量图形</li><li>矢量表</li></ul><div class="sb s-r"><b></b><i></i><s></s><b class="d"></b></div></div>
<div class="dots"></div>
<div class="dockhead second"><svg><use href="#dk"/></svg></div>
<div class="panel a"></div><div class="dots"></div><div class="panel b"></div>
</aside>
</div>
</main>

<section class="win props" aria-label="图层属性">
<svg class="haze" viewBox="0 0 1038 28" preserveAspectRatio="xMinYMin slice" aria-hidden="true"><g filter="url(#soft)" opacity=".6"><path d="M60 16h60v12H60z" fill="#c8dcf2"/><path d="M115 18h20v10h-20z" fill="#f4eeb8"/><path d="M250 16h10v12h-10zM300 12h16v14h-16zM800 10h20v18h-20z" fill="#b4d0f0"/><circle cx="839" cy="14" r="10" fill="#5e8cc9"/><circle cx="839" cy="23" r="6" fill="#222"/><path d="M876 20l12-13 6 8-8 9z" fill="#3978b8"/><path d="M886 16l10 6-6 6-8-4z" fill="#e8d060"/><path d="M911 18l10-9 9 9-9 9z" fill="#8cc4ee"/><path d="M960 7h9v24h-9z" fill="#3b5f9a"/><path d="M969 7h11v24h-11z" fill="#7da4e0"/></g></svg>
<header class="cap"><svg class="i16"><use href="#logo"/></svg><h2>图层属性 — 省（等积投影） — 符号化</h2><button class="close lite" aria-label="关闭"><svg><use href="#x"/></svg></button></header>
<div class="client">
<nav class="side">
<div class="find"><svg><use href="#s-glass"/></svg><input aria-label="查找"></div>
<div class="sidebody"><ul>
<li><svg viewBox="0 0 24 24"><use href="#info"/><text class="gi" x="9" y="18">i</text></svg>信息</li><li><svg><use href="#p-src"/></svg>源</li><li class="sel"><svg><use href="#p-sym"/></svg>符号化</li><li><svg viewBox="0 0 24 24"><use href="#p-lab"/><text class="gl" x="5" y="15">abc</text></svg>标注</li><li><svg viewBox="0 0 24 24"><text class="gm" x="1" y="15">abc</text></svg>掩膜</li><li><svg><use href="#p-3d"/></svg>三维视图</li><li><svg><use href="#p-dia"/></svg>图表</li><li><svg><use href="#p-fld"/></svg>字段</li><li><svg><use href="#p-frm"/></svg>属性表单</li><li><svg><use href="#p-join"/></svg>连接</li><li><svg><use href="#p-sto"/></svg>附加存储</li><li><svg><use href="#p-act"/></svg>动作</li><li><svg><use href="#p-dis"/></svg>显示</li><li><svg><use href="#p-ren"/></svg>渲染</li><li><svg><use href="#i-clock"/></svg>时态</li><li><svg class="pur"><use href="#s-eps"/></svg>变量</li>
</ul><div class="sb s-side"><b></b><i></i><s></s><b class="d"></b></div></div>
</nav>
<div class="pane">
<div class="combo renderer"><svg><use href="#s-class"/></svg><select aria-label="渲染器"><option>分类</option></select><svg class="ar"><use href="#ar"/></svg></div>
<div class="frow v"><label for="val">值</label><div class="combo white"><span class="n123">123</span><input id="val" value="省代码"><button class="drop" aria-label="选择字段"><svg class="ar"><use href="#ar"/></svg></button></div><button class="btn epsb" aria-label="表达式"><svg><use href="#s-eps"/></svg></button></div>
<div class="frow s"><label for="symb">符号</label><button class="btn symb" id="symb" aria-label="符号"><svg><line x1="0" y1=".5" x2="100%" y2=".5"/><line x1=".5" y1="0" x2=".5" y2="100%"/><line class="w" x1="0" y1="18" x2="100%" y2="18"/><line class="w" x1="100%" y1="0" x2="100%" y2="100%"/></svg></button><button class="btn thin" aria-label="符号菜单"><svg class="ar"><use href="#ar"/></svg></button></div>
<div class="frow r"><label for="ramp">颜色渐变</label><button class="btn fill" id="ramp"></button><button class="btn thin" aria-label="渐变菜单"><svg class="ar"><use href="#ar"/></svg></button></div>
<div class="cats"><div class="clip"><table><thead><tr><th>符号<svg class="ar"><use href="#ar"/></svg></th><th>值</th><th>图例</th></tr></thead><tbody>
<tr><td><input type="checkbox" checked aria-label="110000"><svg style="color:#e9b5ee"><use href="#s-sw"/></svg></td><td>110000</td><td>110000</td></tr>
<tr><td><input type="checkbox" checked aria-label="120000"><svg style="color:#d8a8ea"><use href="#s-sw"/></svg></td><td>120000</td><td>120000</td></tr>
<tr><td><input type="checkbox" checked aria-label="130000"><svg style="color:#eda9b4"><use href="#s-sw"/></svg></td><td>130000</td><td>130000</td></tr>
<tr><td><input type="checkbox" checked aria-label="140000"><svg style="color:#f2a7a7"><use href="#s-sw"/></svg></td><td>140000</td><td>140000</td></tr>
<tr><td><input type="checkbox" checked aria-label="150000"><svg style="color:#b9b4f0"><use href="#s-sw"/></svg></td><td>150000</td><td>150000</td></tr>
<tr><td><input type="checkbox" checked aria-label="210000"><svg style="color:#ecb3ca"><use href="#s-sw"/></svg></td><td>210000</td><td>210000</td></tr>
<tr><td><input type="checkbox" checked aria-label="220000"><svg style="color:#e3a4e2"><use href="#s-sw"/></svg></td><td>220000</td><td>220000</td></tr>
<tr><td><input type="checkbox" checked aria-label="230000"><svg style="color:#d396f2"><use href="#s-sw"/></svg></td><td>230000</td><td>230000</td></tr>
<tr><td><input type="checkbox" checked aria-label="310000"><svg style="color:#b3eba5"><use href="#s-sw"/></svg></td><td>310000</td><td>310000</td></tr>
<tr><td><input type="checkbox" checked aria-label="320000"><svg style="color:#f4b9ab"><use href="#s-sw"/></svg></td><td>320000</td><td>320000</td></tr>
<tr><td><input type="checkbox" checked aria-label="330000"><svg style="color:#a6ecb0"><use href="#s-sw"/></svg></td><td>330000</td><td>330000</td></tr>
<tr><td><input type="checkbox" checked aria-label="340000"><svg style="color:#96eeec"><use href="#s-sw"/></svg></td><td>340000</td><td>340000</td></tr>
<tr><td><input type="checkbox" checked aria-label="350000"><svg style="color:#a9bbec"><use href="#s-sw"/></svg></td><td>350000</td><td>350000</td></tr>
<tr><td><input type="checkbox" checked aria-label="360000"><svg style="color:#b68ae6"><use href="#s-sw"/></svg></td><td>360000</td><td>360000</td></tr>
<tr><td><input type="checkbox" checked aria-label="370000"><svg style="color:#e9b398"><use href="#s-sw"/></svg></td><td>370000</td><td>370000</td></tr>
<tr><td><input type="checkbox" checked aria-label="410000"><svg style="color:#82e2b4"><use href="#s-sw"/></svg></td><td>410000</td><td>410000</td></tr>
<tr><td><input type="checkbox" checked aria-label="420000"><svg style="color:#b5a0ec"><use href="#s-sw"/></svg></td><td>420000</td><td>420000</td></tr>
<tr><td><input type="checkbox" checked aria-label="430000"><svg style="color:#8eebd0"><use href="#s-sw"/></svg></td><td>430000</td><td>430000</td></tr>
<tr><td><input type="checkbox" checked aria-label="440000"><svg style="color:#ec7fc8"><use href="#s-sw"/></svg></td><td>440000</td><td>440000</td></tr>
<tr><td><input type="checkbox" checked aria-label="450000"><svg style="color:#addce3"><use href="#s-sw"/></svg></td><td>450000</td><td>450000</td></tr>
<tr><td><input type="checkbox" checked aria-label="460000"><svg style="color:#d6e882"><use href="#s-sw"/></svg></td><td>460000</td><td>460000</td></tr>
</tbody></table></div><div class="sb s-cat"><b></b><i></i><s></s><b class="d"></b></div></div>
<div class="acts"><button class="btn std">分类</button><button class="btn sq" aria-label="添加"><svg><use href="#s-plus"/></svg></button><button class="btn sq" aria-label="删除"><svg><use href="#s-minus"/></svg></button><button class="btn std end menu">高级<svg class="ar"><use href="#ar"/></svg></button></div>
<h3><i></i>图层渲染</h3>
<div class="foot"><button class="btn std menu">样式<svg class="ar"><use href="#ar"/></svg></button><button class="btn std mono end">OK</button><button class="btn std mono">Cancel</button><button class="btn std mono">Apply</button><button class="btn std mono">Help</button></div>
</div>
</div>
</section>

<section class="win symbol" aria-label="符号设置">
<svg class="haze" viewBox="0 0 494 28" preserveAspectRatio="xMinYMin slice" aria-hidden="true"><g filter="url(#soft)" opacity=".4"><path d="M20 4h100v20H20z" fill="#f2f8ff"/><path d="M225 6l16 6-8 14-12-10z" fill="#223c44"/><path d="M268 14h18v14h-18z" fill="#7a5a9a"/><path d="M300 5h12v12h-12z" fill="#caa0d8"/><path d="M190 8h14v10h-14z" fill="#a9d0a8"/><path d="M342 8h16v20h-16zM370 8h14v20h-14zM400 10h20v10h-20z" fill="#738f9a"/></g></svg>
<header class="cap"><svg class="i16"><use href="#logo"/></svg><h2>符号设置</h2><button class="close red" aria-label="关闭"><svg><use href="#x"/></svg></button></header>
<div class="client col">
<div class="top">
<div class="preview"><svg viewBox="0 0 62 62"><rect x="1" y="1" width="60" height="60" fill="none" stroke="#e31a1c" stroke-width="1.300" stroke-dasharray="6 2 1.500 2 1.500 2"/></svg></div>
<ul class="symtree"><li class="sel"><svg class="ar"><use href="#ar"/></svg><svg><use href="#s-sw"/></svg><b>填充</b></li><li class="sub"><svg viewBox="0 0 16 16"><path d="M0 8h16" stroke="#ee8585" stroke-width="2" stroke-dasharray="5 1.500 1.500 1.500"/></svg>简单线条</li></ul>
<div class="symbtns"><button class="btn" aria-label="添加"><svg><use href="#s-plus"/></svg></button><button class="btn dis" aria-label="上移"><svg><use href="#s-tu"/></svg></button><button class="btn dis" aria-label="删除"><svg class="faint"><use href="#s-minus"/></svg></button><button class="btn dis" aria-label="下移"><svg><use href="#s-td"/></svg></button><button class="btn dis" aria-label="复制"><svg><use href="#s-dup"/></svg></button><button class="btn dis" aria-label="锁定"><svg><use href="#s-lock"/></svg></button></div>
</div>
<hr>
<div class="form">
<label for="unit">单位</label><div class="combo"><select id="unit"><option>毫米</option></select><svg class="ar"><use href="#ar"/></svg></div>
<label for="opac">不透明度</label><div class="opac"><input type="range" id="opac" value="100"><div class="spin"><input value="100.0 %" aria-label="不透明度值"><span><svg class="ar up"><use href="#ar"/></svg><svg class="ar"><use href="#ar"/></svg></span></div></div>
<label for="col">颜色</label><div class="colr"><button class="btn" id="col"><i></i></button><button class="btn thin" aria-label="颜色菜单"><svg class="ar"><use href="#ar"/></svg></button></div>
</div>
<hr class="second">
<div class="srch"><div class="combo white"><svg><use href="#s-glass"/></svg><input value="收藏夹" aria-label="搜索符号"><svg class="clr" viewBox="0 0 14 12"><path d="M4 .5h9.500v11H4L.5 6z" fill="#999"/><path d="M6 3.500l5 5M11 3.500l-5 5" stroke="#fff"/></svg><button class="drop" aria-label="分组"><svg class="ar"><use href="#ar"/></svg></button></div><svg class="i16" viewBox="0 0 24 24"><use href="#i-style"/><text class="ga" x="14" y="21">a</text></svg></div>
<div class="gal"><ul>
<li><svg viewBox="0 0 64 55"><rect x="1" y="1" width="62" height="53" fill="url(#plasma)" stroke="#222" stroke-width="1.500"/></svg>gradient plasma</li>
<li><svg viewBox="0 0 64 55"><rect x="1.500" y="1.500" width="61" height="52" fill="#979797" stroke="#c4c4c4"/></svg>gray 3 fill</li>
<li><svg viewBox="0 0 64 55"><rect x="1" y="1" width="62" height="53" fill="url(#h1)" stroke="#111" stroke-width="1.800"/></svg>hashed black /</li>
<li><svg viewBox="0 0 64 55"><rect x="1" y="1" width="62" height="53" fill="url(#h2)" stroke="#111" stroke-width="1.800"/></svg>hashed black \</li>
<li><svg viewBox="0 0 64 55"><rect x="1" y="1" width="62" height="53" fill="url(#h1)"/><rect x="1" y="1" width="62" height="53" fill="url(#h2)" stroke="#111" stroke-width="1.800"/></svg></li>
<li><svg viewBox="0 0 64 55"><rect x="1.500" y="1.500" width="61" height="52" rx="1" fill="none" stroke="#377eb8" stroke-width="3.500"/></svg></li>
<li><svg viewBox="0 0 64 55"><rect x="1.500" y="1.500" width="61" height="52" rx="1" fill="none" stroke="#4daf4a" stroke-width="3.500"/></svg></li>
<li><svg viewBox="0 0 64 55"><rect x="1.500" y="1.500" width="61" height="52" rx="1" fill="none" stroke="#e31a1c" stroke-width="3.500"/></svg></li>
</ul><div class="sb s-gal"><b></b><i></i><s></s><b class="d"></b></div></div>
<div class="gfoot"><button class="btn tog" aria-label="图标视图"><svg><use href="#s-grid"/></svg></button><button class="bare" aria-label="列表视图"><svg><use href="#i-tab"/></svg></button><button class="btn std end">保存符号···</button><button class="btn std menu">高级<svg class="ar"><use href="#ar"/></svg></button></div>
<div class="dlg"><button class="btn std mono ok">OK</button><button class="btn std mono">Cancel</button><button class="btn std mono">Help</button></div>
</div>
</section>

<div class="ime">
<svg class="sogou" viewBox="0 0 32 30"><path d="M1 6Q0 4 3 3L23 0q3 0 4 3l5 19q0 3-3 4L9 31q-3 0-4-3z" fill="#f0562a"/><path d="M25 6c-7-3-17-1-17 4 0 6 16 3 16 8 0 4-9 5-16 2" fill="none" stroke="#fff" stroke-width="4"/></svg>
<b>中</b>
<svg viewBox="0 0 16 16"><circle cx="4" cy="5" r="2" fill="none" stroke="#0b6fd8" stroke-width="1.500"/><path d="M10 8h4v3l-3 4h-1l1-4h-1z" fill="#0b6fd8"/></svg>
<svg viewBox="0 0 16 16"><rect x="5" y="0" width="6" height="10" rx="3" fill="#0b6fd8"/><path d="M2.500 6c0 8 11 8 11 0M8 12v4M5.500 15.300h5" fill="none" stroke="#0b6fd8" stroke-width="1.500"/></svg>
<svg viewBox="0 0 16 16"><rect x=".5" y="2" width="15" height="12" rx="1" fill="#0b6fd8"/><path d="M3 5.500h10.500M3 8.300h10.500" stroke="#fff" stroke-width="1.500" stroke-dasharray="1.500 1.500"/><path d="M4 11.500h8" stroke="#fff" stroke-width="1.500"/></svg>
<svg viewBox="0 0 16 16"><path d="M5 1c1 2 5 2 6 0l5 3-2 4-2-1v8.500H4V7L2 8 0 4z" fill="#0b6fd8"/></svg>
<svg viewBox="0 0 16 16"><g fill="#0b6fd8"><rect x="1" y="1.500" width="6" height="6" rx="1"/><rect x="1" y="9" width="6" height="6" rx="1"/><rect x="9" y="9" width="6" height="6" rx="1"/></g><rect x="9.800" y="2.300" width="4.500" height="4.500" rx="1" fill="none" stroke="#0b6fd8" stroke-width="1.600"/></svg>
</div>
</body>
</html>
```
FILE: styles.css
```css
*{box-sizing:border-box}
html,body{height:100%}
body{margin:0;overflow:hidden;position:relative;font:12px/18px "Noto Sans","Noto Sans CJK SC",sans-serif;color:#000;background:#efefef}
button,input,select{font:inherit;color:inherit;margin:0;padding:0;border:0;background:none;appearance:none;border-radius:0;outline:0;min-width:0}
ul{list-style:none;margin:0;padding:0}
h1,h2,h3{margin:0;font-size:12px;font-weight:400}
svg{flex:none;display:block}
.defs{position:absolute}
.i16{width:16px;height:16px}
svg.ar{width:8px;height:5px;color:#555}
.ga{font:12px "Liberation Sans",sans-serif;fill:#555}
.gi{font:italic 700 19px "Liberation Serif",serif;fill:#fff}
.gi.small{font-size:14px}
.g1{font:700 9px "Liberation Sans",sans-serif;fill:#aaa}
.gt{font:700 15px "Liberation Serif",serif;fill:#444}
.gl{font:700 8px "DejaVu Sans",sans-serif;fill:#333}
.gm{font:700 11px "DejaVu Sans",sans-serif;fill:#444;stroke:#e3e9f5;stroke-width:5px;stroke-linejoin:round;paint-order:stroke}
.app{min-height:100%;height:100%;display:flex;flex-direction:column}
.haze{position:absolute;inset:0;width:100%;z-index:-1}

.titlebar{position:relative;z-index:0;height:20px;flex:none;display:flex;align-items:center;gap:2px;background:linear-gradient(90deg,#2763ad,#1b5fb0 40%,#0f4c97 60%,#1a5aa6 85%,#2f69ad);border-bottom:1px solid #1c3f73;overflow:hidden;padding-bottom:3px}
.titlebar .haze{height:20px}
.winbtns{margin-left:auto;margin-right:3px;display:flex;height:16px;border:1px solid #a5bedb;border-top:0;border-radius:0 0 4px 4px;background:#3f6fa8}
.winbtns button{width:28px;display:grid;place-items:center;border-right:1px solid #a5bedb}
.winbtns .wide{width:46px;border:0}
.winbtns svg{width:12px;height:11px}

.menubar{flex:none;height:22px;display:flex;gap:15px;padding:0 7px;color:#9c9c9c;border-bottom:1px solid #d3d3d3;background:#f0f0f0}
.toolbar{flex:none;height:39px;display:flex;align-items:center;border-bottom:1px solid #b5b5b5;background:linear-gradient(#fbfbfb,#ededed)}
.toolbar.last{height:38px}
.toolbar button{width:32px;height:32px;margin-right:1px;display:flex;align-items:center;justify-content:center}
.toolbar button>svg:first-child{width:24px;height:24px}
.toolbar .on{border:1px solid #aaa;border-radius:3px;background:#dcdcdc}
.toolbar .dd{width:44px;gap:6px;padding-left:4px;justify-content:flex-start}
.toolbar .off svg.ar{color:#aaa}
.grip{width:16px;height:18px;flex:none;background:linear-gradient(90deg,#0000 9px,#bbb 9px 10px,#0000 10px 12px,#bbb 12px 13px,#0000 13px);mask:repeating-linear-gradient(#000 0 1px,#0000 1px 3px)}
.grip.first{width:10px;background:linear-gradient(90deg,#0000 2px,#bbb 2px 3px,#0000 3px 5px,#bbb 5px 6px,#0000 6px)}

.workspace{flex:1;min-height:0;display:flex;justify-content:space-between;background:#efefef}
.dock{display:flex;flex-direction:column;min-height:0}
.left{width:196px}
.left h2{padding-left:1px;line-height:22px}
.left h2.tall{padding-top:5px}
.mini{height:30px;display:flex;gap:9px;padding:2px 5px 6px}
.mini svg{width:16px;height:16px}
.mini.layers{padding:3px 5px}
.mini .eps{display:flex;gap:6px;align-items:center;color:#7a4a86}
.mini svg.ar{width:8px;height:5px}
.tree{background:#fff;border-top:1px solid #b0b0b0;border-bottom:1px solid #b0b0b0;overflow:hidden}
.tree.grow{flex:1 1 183px;min-height:0}
.tree li{height:19px;display:flex;align-items:center;gap:6px;white-space:nowrap}
.tree li::before{content:"";border:4px solid transparent;border-left:5px solid #555;border-right:0;margin:0 4px 0 6px}
.tree li.leaf::before{visibility:hidden}
.tree li>svg{width:16px;height:16px}
.laylist{height:70px;font-weight:700;font-size:13px}
.laylist li.cur{background:#ececec}
.gray{color:#e2e2e2}.blue{color:#9cc8ee}
input[type=checkbox]{width:14px;height:14px;flex:none;border:1px solid #aaa;background:#fff;display:grid;place-items:center}
input[type=checkbox]:checked::before{content:"";width:10px;height:10px;background:#000;clip-path:polygon(0 50%,20% 45%,38% 70%,75% 0,100% 0,48% 100%,28% 100%)}
.combo{display:flex;align-items:center;border:1px solid #a8a8a8;border-radius:3px;background:linear-gradient(#fdfdfd,#ebebeb)}
.combo select,.combo input{flex:1;height:18px}
.combo.white{background:#fff}
.combo>svg:first-child{width:16px;height:16px}
.combo svg.ar{margin-right:7px}
.combo.flat{height:25px;border-radius:0;border-width:1px 0;padding-left:3px;gap:2px;font-family:"Liberation Sans","Noto Sans CJK SC",sans-serif}
.plain{height:23px;flex:none;margin:2px 0 3px;background:#fff;border:1px solid #b0b0b0;border-width:1px 0}
.stats{display:block;height:76px;flex:none;background:#fff;border:1px solid #b0b0b0;border-width:1px 0;border-collapse:collapse}
.stats thead,.stats tr{display:flex;width:100%}
.stats th{flex:1;height:22px;font-weight:400;line-height:21px;border-bottom:1px solid #b0b0b0;border-right:1px solid #c0c0c0;background:linear-gradient(#fdfdfd,#ececec)}
.only{height:29px;flex:none;display:flex;align-items:center;gap:5px;margin-left:-3px}
.locator{height:22px;flex:none;margin:0 0 1px 1px;display:flex;align-items:center;gap:6px;padding-left:8px;border:1px solid #aaa;border-radius:3px;background:#fff}
.locator svg{width:14px;height:14px}
.locator input{width:150px}
.locator input::placeholder{color:#7a7a7a;opacity:1}

.right{width:213px}
.dockhead{height:22px;padding:5px 2px 0;display:flex;justify-content:flex-end}
.dockhead svg{width:25px;height:11px}
.rtools{height:29px;display:flex;align-items:center;gap:7px;padding-bottom:3px;justify-content:flex-end;padding-right:93px}
.rtools svg{width:16px;height:16px}
.rtools i{width:1px;height:12px;background:#c4c4c4}
.rtools .press{width:23px;height:23px;margin-right:-2px;border:1px solid #aaa;border-radius:3px;background:#ddd}
.rsearch{height:22px;flex:none;border:1px solid #aaa;border-radius:3px;background:#fff}
.rtree{flex:1 1 176px;min-height:0;display:flex;justify-content:space-between;background:#fff;border:1px solid #b0b0b0}
.rtree li{height:19px;padding-left:26px}
.dots{height:5px;flex:none;width:16px;margin-left:77px;background:repeating-linear-gradient(90deg,#bbb 0 1px,#0000 1px 3px) 0 2px/100% 1px no-repeat}
.panel{border:1px solid #b0b0b0;background:#fff;flex:none}
.panel.a{height:192px}.panel.b{height:70px;margin-bottom:25px}

.sb{width:15px;flex:none;display:flex;flex-direction:column;border-left:1px solid #b0b0b0;background:#e6e6e6}
.sb b{height:14px;flex:none;background:#fafafa;display:grid;place-items:center;border-bottom:1px solid #b0b0b0}
.sb b.d{border-bottom:0;border-top:1px solid #b0b0b0}
.sb b::before{content:"";border:4px solid transparent;border-bottom:4px solid #555;border-top:0}
.sb b.d::before{border-bottom:0;border-top:4px solid #555}
.sb i{background:linear-gradient(90deg,#fff,#eee);border-bottom:1px solid #b0b0b0}
.s-side i{flex:421}.s-side s{flex:132}
.s-cat i{flex:224}.s-cat s{flex:151}
.s-r i{flex:55}.s-r s{flex:92}
.s-gal i{flex:74}.s-gal s{flex:101}

.win{position:absolute;display:flex;flex-direction:column;z-index:1;border:1px solid #5c6668;border-radius:7px 7px 0 0;overflow:hidden}
.props{left:167px;right:156px;top:80px;bottom:0;padding:0 6px 4px;border-bottom:0;background:#e6fbfd}
.symbol{left:481px;width:496px;top:84px;bottom:0;padding:0 5px 1px;border-bottom:0;border-color:#1d2a38;background:linear-gradient(#c3d9f0,#cfe0f2 120px,#e3edf7 178px,#a9cdf0 182px,#b9dcfb 330px,#a9c8e8)}
.symbol::before{content:"";position:absolute;inset:0;z-index:-1;background:linear-gradient(90deg,#dbe9f7,#b8d1ec 55%,#9fbfe4 80%,#c5daf0) 0 0/100% 28px no-repeat}
.props .haze,.symbol .haze{height:28px}
.cap{height:28px;flex:none;display:flex;align-items:center;gap:5px;padding-left:1px}
.cap .i16{margin-top:1px}
.cap h2{padding-top:1px}
.close{margin-left:auto;align-self:flex-start;width:47px;height:19px;display:grid;place-items:center;border:1px solid #7f8f98;border-top:0;border-radius:0 0 4px 4px}
.close svg{width:12px;height:10px}
.close.lite{background:#f4ffff;color:#fff}
.close.red{background:linear-gradient(#e5a08f,#d0543f 50%,#b52f1c 51%,#cf6a45);border-color:#5a1510;color:#fff}
.client{flex:1;min-height:0;display:flex;background:#efefef;border:1px solid #7f8a8c}
.symbol .client{border-color:#55667a}

.side{width:161px;flex:none;background:#5c5c5c;display:flex;flex-direction:column}
.find{height:22px;display:flex;align-items:center;gap:4px;padding-left:8px;background:#fff;border:1px solid #bbb}
.find svg{width:14px;height:14px}
.sidebody{flex:1;min-height:0;display:flex;margin-top:6px}
.sidebody ul{flex:1;overflow:hidden;color:#fff}
.sidebody li{height:36px;display:flex;align-items:center;gap:8px;padding-left:5px}
.sidebody li svg{width:24px;height:24px;overflow:visible}
.sidebody li.sel{background:#efefef;color:#000;padding-left:7px}
.pur{color:#5e3a6e}
.sidebody .sb{width:14px;border-left:0}
.pane{flex:1;min-width:0;display:flex;flex-direction:column;padding:4px 3px 2px 4px}
.renderer{height:23px;padding-left:6px;gap:3px}
.renderer,.frow,.cats,.acts{flex:none}
.frow{display:flex;align-items:stretch;gap:1px}
.frow label{width:53px;align-self:center}
.frow .combo{flex:1}
.frow.v{height:24px;margin-top:6px;gap:7px}.frow.v label{margin-right:-6px}
.frow.s{height:25px;margin-top:6px}
.frow.r{height:22px;margin-top:6px}
.n123{font:700 10px/18px "Liberation Serif",serif;color:#999;padding:0 6px 0 4px}
.drop{width:20px;align-self:stretch;border-left:1px solid #aaa;display:grid;place-items:center}
.combo .drop svg.ar{margin:0}
.btn{display:flex;align-items:center;justify-content:center;border:1px solid #a8a8a8;border-radius:3px;background:linear-gradient(#fefefe,#ececec);flex:none}
.btn svg{width:16px;height:16px}
.btn svg.ar{width:8px;height:5px}
.thin{width:12px}
.epsb{width:25px;color:#6a3f75}
.symb{flex:1;padding:2px 5px 3px 4px}
.symb svg{width:100%;height:19px;overflow:hidden}
.symb line{stroke:#ee8a8a;stroke-width:1;stroke-dasharray:6 2 1 2 1 2}
.symb line.w{stroke-width:2}
.fill{flex:1}
.cats{flex:1 1 402px;min-height:0;display:flex;margin-top:7px;background:#fff;border:1px solid #b0b0b0}
.clip{flex:1;overflow:hidden}
.cats table{width:100%;border-collapse:collapse;table-layout:fixed}
.cats th{height:20px;padding:0 0 0 3px;text-align:left;font-weight:400;line-height:18px;border-bottom:1px solid #b0b0b0;border-right:1px solid #c4c4c4;background:linear-gradient(#fefefe,#ececec)}
.cats th:nth-child(1){width:53px}.cats th:nth-child(2){width:69px}
.cats th:last-child{border-right:0}
.cats th .ar{display:inline-block;vertical-align:middle;margin:0 0 2px 13px}
.cats td{height:18px;padding:0 0 0 3px;line-height:18px}
.cats td:first-child{display:flex;align-items:center;gap:6px}
.cats td svg{width:16px;height:16px}
.acts{display:flex;align-items:center;gap:6px;padding:6px 0 4px}
.std{width:80px;height:20px;position:relative}
.end{margin-left:auto}
.sq{width:28px;height:24px}
.sq svg{width:18px;height:18px}
.menu svg.ar{position:absolute;right:6px;top:7px;width:6px;height:4px}
.menu{padding-right:12px}
.mono{font:10px/18px "Liberation Mono",monospace}
.pane h3{display:flex;align-items:center;gap:9px;height:24px;font-weight:700;font-size:13px;padding-left:5px;flex:none}
.pane h3 i{border:5px solid transparent;border-left:8px solid #333;border-right:0}
.foot{display:flex;gap:6px;padding-top:4px;flex:none}

.col{flex-direction:column;padding:11px 11px 10px}
.top{display:flex;gap:6px;flex:none}
.preview{width:126px;display:grid;place-items:center}
.preview svg{width:62px;height:62px;margin-top:2px}
.symtree{flex:1;margin-top:2px;height:126px;background:#fff;border:1px solid #b0b0b0}
.symtree li{height:19px;display:flex;align-items:center;gap:6px}
.symtree li svg{width:16px;height:16px}
.symtree li.sel{background:#3a99ff;color:#fff;font-size:13px;padding-left:6px}
.symtree li.sel svg:nth-child(2){color:#8b6db5;margin-left:2px}
.symtree li.sel svg.ar{width:9px;height:5px;color:#123a66}
.symtree .sub{padding-left:43px}
.symbtns{display:grid;grid-template-columns:28px 28px;gap:4px 6px;align-content:start}
.symbtns .btn{height:24px}
.symbtns .btn svg{width:17px;height:17px}
.symbtns .dis{border-color:#c4c4c4}
.symbtns .faint{opacity:.3}
hr{width:100%;height:2px;margin:8px 0;border:0;border-top:1px solid #999;border-bottom:1px solid #fff;flex:none}
.form{display:grid;grid-template-columns:48px 1fr;align-items:center;padding-right:9px;grid-auto-rows:22px;flex:none}
.form label{white-space:nowrap}
.form .combo{height:22px;padding-left:4px}
.opac{display:flex;align-items:center;gap:3px}
input[type=range]{flex:1;height:14px}
input[type=range]::-webkit-slider-runnable-track{height:5px;background:#5faaf8;border:1px solid #2a6fbd;border-radius:2px}
input[type=range]::-webkit-slider-thumb{appearance:none;width:13px;height:13px;margin-top:-5px;border:1px solid #a0a0a0;border-radius:3px;background:#fcfcfc}
.spin{width:100px;height:20px;display:flex;border:1px solid #a8a8a8;border-radius:3px;background:#fff}
.spin input{flex:1;padding-left:4px;font:10px/18px "Liberation Mono",monospace}
.spin span{width:15px;border-left:1px solid #aaa;display:flex;flex-direction:column;align-items:center;justify-content:center;gap:3px;background:#f3f3f3}
.spin svg.ar.up{transform:rotate(180deg);color:#aaa}
.colr{display:flex;gap:1px}
.colr .btn{height:22px}
.colr .btn:first-child{flex:1;padding:2px 4px 3px}
.colr i{width:100%;height:16px;border-radius:3px;background:#e31a1c}
hr.second{margin:66px 0 6px}
.srch{display:flex;align-items:center;gap:11px;flex:none;padding-right:12px}
.srch .combo{flex:1;height:22px;gap:5px;padding-left:10px}
.srch .combo>svg:first-child{width:14px;height:14px}
.clr{width:14px;height:12px;margin-right:2px}
.gal{flex:1 1 204px;min-height:0;margin:4px 9px 0 0;display:flex;background:#fff;border:1px solid #b0b0b0}
.gal ul{flex:1;display:grid;grid-template-columns:repeat(auto-fill,101px);grid-auto-rows:123px;padding:20px 0 0 2px;overflow:hidden}
.gal li{display:flex;flex-direction:column;align-items:center;text-align:center;font-size:13px;line-height:17px;padding:0 16px;white-space:nowrap}
.gal li:first-child{white-space:normal}
.gal li svg{width:64px;height:55px;margin-bottom:14px}
.gfoot{display:flex;align-items:center;gap:6px;padding:5px 9px 0 0;flex:none}
.tog{width:24px;height:24px;background:#ddd}
.tog svg{width:15px;height:15px}
.bare{margin-left:-2px}.bare svg{width:16px;height:16px}
.dlg{display:flex;justify-content:flex-end;gap:6px;padding-top:21px;flex:none}
.ok{border-color:#4a94e8;background:linear-gradient(#fefefe,#e6eaf1)}

.ime{position:absolute;z-index:2;right:0;bottom:0;width:178px;height:27px;display:flex;align-items:center;gap:8px;padding-right:4px;color:#0b6fd8;background:linear-gradient(#0000 3px,#b9cfe6 3px 4px,#fff 4px) 22px 0 no-repeat}
.ime svg{width:16px;height:16px}
.ime .sogou{width:32px;height:30px;margin-right:-2px}
.ime b{width:16px;font-size:15px;line-height:20px}
```
